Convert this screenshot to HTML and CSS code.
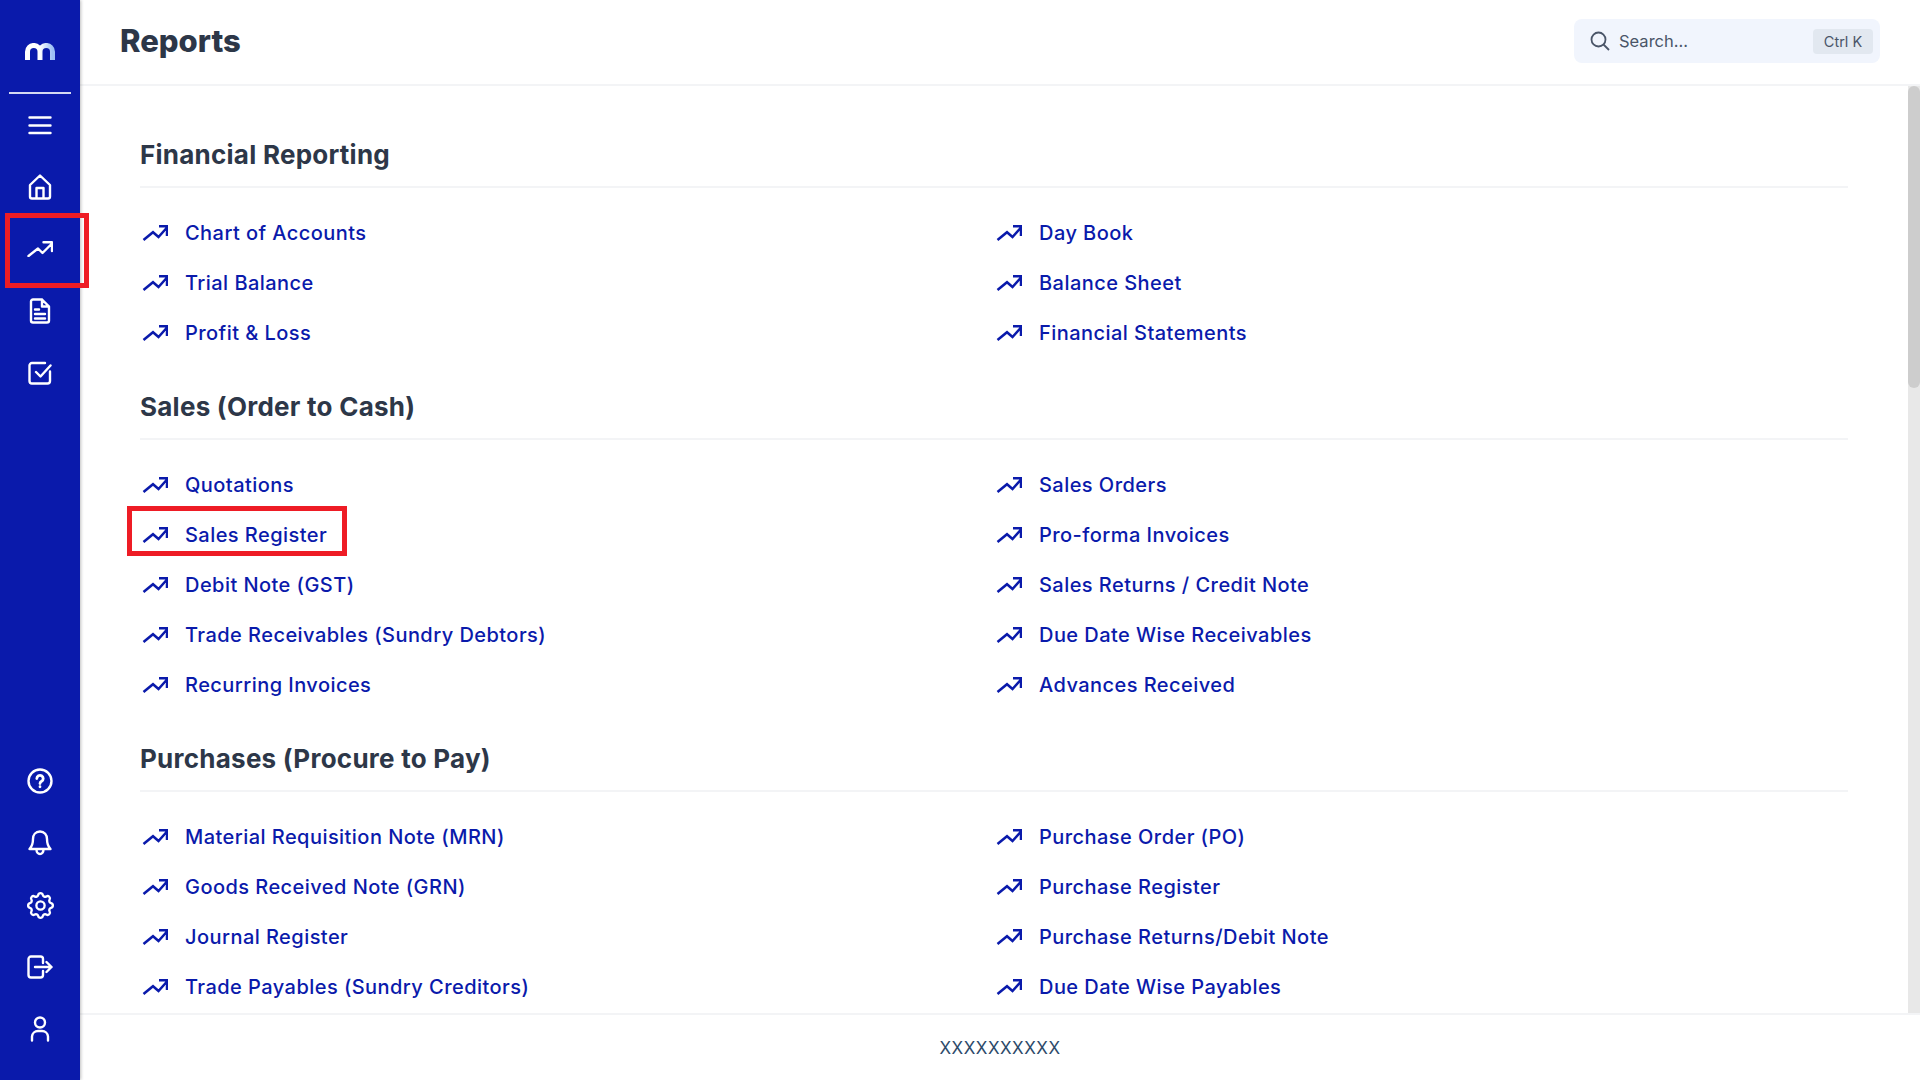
FILE: index.html
```html
<!DOCTYPE html>
<html lang="en">
<head>
<meta charset="utf-8">
<title>Reports</title>
<link rel="stylesheet" href="styles.css">
</head>
<body>
<svg class="defs" width="0" height="0" aria-hidden="true">
  <symbol id="trend" viewBox="0 0 26 16"><path d="M1.500 15 11 7.200l5.500 4.800L25 2.500M17 1.300H25V11" fill="none" stroke="currentColor" stroke-width="2.500"/></symbol>
</svg>
<div class="app">
  <aside class="sidebar">
    <div class="logo">
      <svg width="30" height="17" viewBox="0 0 30 17"><defs><linearGradient id="lg" x1="0" x2="1" y1="0" y2="0"><stop offset=".5" stop-color="#fff"/><stop offset="1" stop-color="#9cc0f5"/></linearGradient></defs><path d="M2.500 17V8.700a6.250 6.250 0 0 1 12.500 0V17M15 8.700a6.250 6.250 0 0 1 12.500 0V17" fill="none" stroke="url(#lg)" stroke-width="5"/></svg>
    </div>
    <nav class="side-nav">
      <div class="side-group">
        <a class="side-item"><svg width="24" height="24" viewBox="0 0 24 24" class="si"><path d="M1.500 4.500h21M1.500 12.500h21M1.500 20h21"/></svg></a>
        <a class="side-item"><svg width="24" height="26" viewBox="0 0 24 26" class="si"><path d="M12 1.500 2 11v11.500a2 2 0 0 0 2 2h16a2 2 0 0 0 2-2V11zM8.500 24.500V14h7v10.500"/></svg></a>
        <a class="side-item"><svg width="26" height="16" viewBox="0 0 26 16" class="si"><path d="M1.500 15 11 7.500l4.500 4.500L25 2.500M16.500 1.300H25V10"/></svg></a>
        <a class="side-item"><svg width="22" height="26" viewBox="0 0 22 26" class="si"><path d="M13 1.500H4a2 2 0 0 0-2 2v19a2 2 0 0 0 2 2h14a2 2 0 0 0 2-2V8.500zM13 1.500v7h7M6 11.500h4M6 16h10M6 20.500h10"/></svg></a>
        <a class="side-item"><svg width="24" height="24" viewBox="0 0 24 24" class="si"><path d="M22 10.500V20a2.500 2.500 0 0 1-2.500 2.500H4A2.500 2.500 0 0 1 1.500 20V4.500A2.500 2.500 0 0 1 4 2h13M8 11l4.500 4.500L22.500 4.500"/></svg></a>
      </div>
      <div class="side-group">
        <a class="side-item"><svg width="26" height="26" viewBox="0 0 26 26" class="si"><circle cx="13" cy="13" r="11.500"/><path class="si-q" d="M9.800 10.500a3.200 3.200 0 1 1 4.800 2.800c-1 .6-1.600 1-1.600 2.200M13 18.700v.1"/></svg></a>
        <a class="side-item"><svg width="24" height="26" viewBox="0 0 24 26" class="si"><path d="M12 1.500c-4.500 0-7 3.500-7 7.500 0 6-1.500 8-3.500 10h21c-2-2-3.500-4-3.500-10 0-4-2.500-7.500-7-7.500zM8.500 19.500a3.500 4.500 0 0 0 7 0"/></svg></a>
        <a class="side-item"><svg width="33" height="33" viewBox="0 0 24 24" class="si si-gear"><path d="M10.325 4.317c.426-1.756 2.924-1.756 3.350 0a1.724 1.724 0 0 0 2.573 1.066c1.543-.940 3.310.826 2.370 2.370a1.724 1.724 0 0 0 1.065 2.572c1.756.426 1.756 2.924 0 3.350a1.724 1.724 0 0 0-1.066 2.573c.940 1.543-.826 3.310-2.370 2.370a1.724 1.724 0 0 0-2.572 1.065c-.426 1.756-2.924 1.756-3.350 0a1.724 1.724 0 0 0-2.573-1.066c-1.543.940-3.310-.826-2.370-2.370a1.724 1.724 0 0 0-1.065-2.572c-1.756-.426-1.756-2.924 0-3.350a1.724 1.724 0 0 0 1.066-2.573c-.940-1.543.826-3.310 2.370-2.370.996.608 2.296.070 2.572-1.065z"/><circle cx="12" cy="12" r="3"/></svg></a>
        <a class="side-item"><svg width="26" height="24" viewBox="0 0 26 24" class="si"><path d="M16 8V4a2.500 2.500 0 0 0-2.500-2.500H4A2.500 2.500 0 0 0 1.500 4v16A2.500 2.500 0 0 0 4 22.500h9.500A2.500 2.500 0 0 0 16 20v-4M8 12h16.500M19.500 7l5 5-5 5"/></svg></a>
        <a class="side-item"><svg width="20" height="26" viewBox="0 0 20 26" class="si"><circle cx="10" cy="6.500" r="5"/><path d="M2 24.500v-4a6 6 0 0 1 6-5.500h4a6 6 0 0 1 6 5.500v4"/></svg></a>
      </div>
    </nav>
  </aside>
  <div class="main">
    <header class="topbar">
      <h1 class="page-title">Reports</h1>
      <div class="search">
        <svg width="20" height="20" viewBox="0 0 20 20" class="search-icon"><circle cx="8.500" cy="8.500" r="7"/><path d="m13.500 13.500 5.500 5.500"/></svg>
        <span class="search-text">Search...</span>
        <span class="kbd">Ctrl K</span>
      </div>
    </header>
    <div class="body-row">
      <div class="content">
        <section class="section">
          <h2 class="section-title">Financial Reporting</h2>
          <ul class="links">
            <li class="link"><svg class="ti"><use href="#trend"/></svg>Chart of Accounts</li>
            <li class="link"><svg class="ti"><use href="#trend"/></svg>Day Book</li>
            <li class="link"><svg class="ti"><use href="#trend"/></svg>Trial Balance</li>
            <li class="link"><svg class="ti"><use href="#trend"/></svg>Balance Sheet</li>
            <li class="link"><svg class="ti"><use href="#trend"/></svg>Profit &amp; Loss</li>
            <li class="link"><svg class="ti"><use href="#trend"/></svg>Financial Statements</li>
          </ul>
        </section>
        <section class="section">
          <h2 class="section-title">Sales (Order to Cash)</h2>
          <ul class="links">
            <li class="link"><svg class="ti"><use href="#trend"/></svg>Quotations</li>
            <li class="link"><svg class="ti"><use href="#trend"/></svg>Sales Orders</li>
            <li class="link"><svg class="ti"><use href="#trend"/></svg>Sales Register</li>
            <li class="link"><svg class="ti"><use href="#trend"/></svg>Pro-forma Invoices</li>
            <li class="link"><svg class="ti"><use href="#trend"/></svg>Debit Note (GST)</li>
            <li class="link"><svg class="ti"><use href="#trend"/></svg>Sales Returns / Credit Note</li>
            <li class="link"><svg class="ti"><use href="#trend"/></svg>Trade Receivables (Sundry Debtors)</li>
            <li class="link"><svg class="ti"><use href="#trend"/></svg>Due Date Wise Receivables</li>
            <li class="link"><svg class="ti"><use href="#trend"/></svg>Recurring Invoices</li>
            <li class="link"><svg class="ti"><use href="#trend"/></svg>Advances Received</li>
          </ul>
        </section>
        <section class="section">
          <h2 class="section-title">Purchases (Procure to Pay)</h2>
          <ul class="links">
            <li class="link"><svg class="ti"><use href="#trend"/></svg>Material Requisition Note (MRN)</li>
            <li class="link"><svg class="ti"><use href="#trend"/></svg>Purchase Order (PO)</li>
            <li class="link"><svg class="ti"><use href="#trend"/></svg>Goods Received Note (GRN)</li>
            <li class="link"><svg class="ti"><use href="#trend"/></svg>Purchase Register</li>
            <li class="link"><svg class="ti"><use href="#trend"/></svg>Journal Register</li>
            <li class="link"><svg class="ti"><use href="#trend"/></svg>Purchase Returns/Debit Note</li>
            <li class="link"><svg class="ti"><use href="#trend"/></svg>Trade Payables (Sundry Creditors)</li>
            <li class="link"><svg class="ti"><use href="#trend"/></svg>Due Date Wise Payables</li>
          </ul>
        </section>
      </div>
      <div class="scrollbar"><div class="scroll-thumb"></div></div>
    </div>
    <footer class="footer">XXXXXXXXXX</footer>
  </div>
  <div class="mark mark-nav"></div>
  <div class="mark mark-link"></div>
</div>
</body>
</html>
```
FILE: styles.css
```css
* { box-sizing: border-box; }
html, body { margin: 0; height: 100%; overflow: hidden; }
body { font-family: Inter, "Noto Sans", sans-serif; background: #fff; color: #2d3748; }
.defs { position: absolute; }
.app { display: flex; height: 1080px; position: relative; }

.sidebar { width: 80px; flex: none; background: #0a1aab; box-shadow: 1px 0 3px rgba(0,0,0,.25); display: flex; flex-direction: column; z-index: 2; }
.logo { height: 94px; margin: 0 9px; border-bottom: 2px solid #d4d9f2; display: flex; align-items: flex-start; justify-content: center; padding-top: 43px; }
.side-nav { flex: 1; display: flex; flex-direction: column; justify-content: space-between; padding-bottom: 20px; }
.side-group { display: flex; flex-direction: column; }
.side-item { height: 62px; display: flex; align-items: center; justify-content: center; }
.si { fill: none; stroke: #fff; stroke-width: 2.4; stroke-linejoin: round; stroke-linecap: round; }
.si-gear { stroke-width: 1.700; }
.si-q { stroke-width: 2.800; }

.main { flex: 1; min-width: 0; display: flex; flex-direction: column; }
.topbar { height: 86px; flex: none; border-bottom: 2px solid #f3f4f6; display: flex; align-items: center; justify-content: space-between; padding: 0 40px 2px 40px; }
.page-title { margin: 0; font-size: 31px; font-weight: 800; color: #2d3748; line-height: 40px; }
.search { width: 306px; height: 44px; background: #f1f5fd; border-radius: 8px; display: flex; align-items: center; padding: 0 7px 0 16px; }
.search-icon { fill: none; stroke: #4a5568; stroke-width: 1.800; flex: none; }
.search-text { flex: 1; margin-left: 9px; font-size: 16.500px; color: #4a5568; }
.kbd { width: 60px; height: 25px; background: #e2e8f0; border-radius: 4px; font-size: 14.500px; color: #4a5568; display: flex; align-items: center; justify-content: center; }

.body-row { flex: 1; min-height: 0; display: flex; }
.content { flex: 1; min-width: 0; overflow: hidden; padding: 49px 60px 0 60px; }
.scrollbar { width: 12px; flex: none; background: #e8e8e8; }
.scroll-thumb { height: 302px; background: #cdcdcd; border-radius: 6px; }

.section + .section { margin-top: 29px; }
.section-title { margin: 0; font-size: 26px; font-weight: 700; line-height: 40px; padding-bottom: 11px; border-bottom: 2px solid #f3f4f6; color: #2d3748; letter-spacing: .25px; }
.links { list-style: none; margin: 20px 0 0; padding: 0; display: grid; grid-template-columns: 1fr 1fr; }
.link { height: 50px; display: flex; align-items: center; font-size: 20px; font-weight: 500; color: #0a1aab; letter-spacing: .45px; }
.ti { width: 26px; height: 16px; margin: 0 17px 0 2px; flex: none; }

.footer { height: 67px; flex: none; border-top: 2px solid #f3f4f6; display: flex; align-items: center; justify-content: center; font-size: 17px; letter-spacing: .5px; color: #2d4a6a; }

.mark { position: absolute; border: 5px solid #ee1c25; z-index: 3; }
.mark-nav { left: 5px; top: 213px; width: 84px; height: 75px; }
.mark-link { left: 127px; top: 506px; width: 220px; height: 50px; }
```
